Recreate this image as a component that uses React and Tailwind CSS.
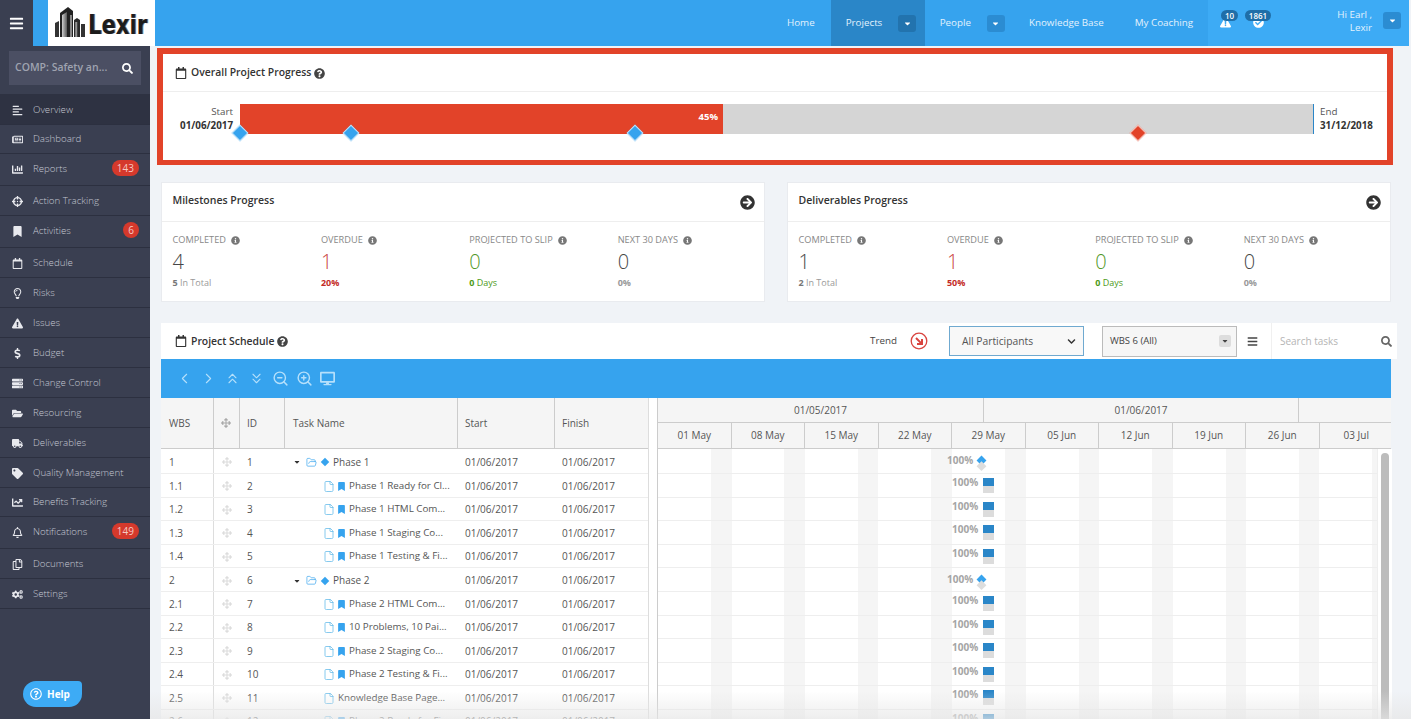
import {
  FaAlignLeft, FaArrowCircleRight, FaArrowsAlt, FaBars, FaBookmark, FaCaretDown, FaChartBar, FaChartLine,
  FaCheckCircle, FaChevronDown, FaCogs, FaCrosshairs, FaDesktop, FaDollarSign, FaExclamationTriangle, FaFolderOpen,
  FaInfoCircle, FaRegBell, FaRegCalendar, FaRegCopy, FaRegLightbulb, FaRegNewspaper, FaRegQuestionCircle,
  FaQuestionCircle, FaSearch, FaServer, FaTag, FaTruck,
} from 'react-icons/fa';
import { ChevronLeft, ChevronRight, ChevronsDown, ChevronsUp, File, FolderOpen, ZoomIn, ZoomOut } from 'lucide-react';

const menu = [
  { name: 'Overview', icon: FaAlignLeft, h: 'h-[31px]', lh: 'h-[32px]', active: true },
  { name: 'Dashboard', icon: FaRegNewspaper, h: 'h-[29px]', lh: 'h-[28px]' },
  { name: 'Reports', icon: FaChartBar, h: 'h-[32px]', badge: '143' },
  { name: 'Action Tracking', icon: FaCrosshairs, h: 'h-[30px]' },
  { name: 'Activities', icon: FaBookmark, h: 'h-[32px]', badge: '6' },
  { name: 'Schedule', icon: FaRegCalendar, h: 'h-[30px]' },
  { name: 'Risks', icon: FaRegLightbulb, h: 'h-[30px]' },
  { name: 'Issues', icon: FaExclamationTriangle, h: 'h-[30px]' },
  { name: 'Budget', icon: FaDollarSign, h: 'h-[30px]' },
  { name: 'Change Control', icon: FaServer, h: 'h-[30px]' },
  { name: 'Resourcing', icon: FaFolderOpen, h: 'h-[30px]' },
  { name: 'Deliverables', icon: FaTruck, h: 'h-[30px]' },
  { name: 'Quality Management', icon: FaTag, h: 'h-[30px]' },
  { name: 'Benefits Tracking', icon: FaChartLine, h: 'h-[29px]', lh: 'h-[28px]' },
  { name: 'Notifications', icon: FaRegBell, h: 'h-[32px]', badge: '149' },
  { name: 'Documents', icon: FaRegCopy, h: 'h-[30px]' },
  { name: 'Settings', icon: FaCogs, h: 'h-[30px]' },
];

const tasks = [
  { wbs: '1', id: '1', name: 'Phase 1', phase: true, h: 'h-[25px]' },
  { wbs: '1.1', id: '2', name: 'Phase 1 Ready for Cl...' },
  { wbs: '1.2', id: '3', name: 'Phase 1 HTML Com...' },
  { wbs: '1.3', id: '4', name: 'Phase 1 Staging Co...' },
  { wbs: '1.4', id: '5', name: 'Phase 1 Testing & Fi...' },
  { wbs: '2', id: '6', name: 'Phase 2', phase: true, h: 'h-[24px]' },
  { wbs: '2.1', id: '7', name: 'Phase 2 HTML Com...' },
  { wbs: '2.2', id: '8', name: '10 Problems, 10 Pai...' },
  { wbs: '2.3', id: '9', name: 'Phase 2 Staging Co...' },
  { wbs: '2.4', id: '10', name: 'Phase 2 Testing & Fi...' },
  { wbs: '2.5', id: '11', name: 'Knowledge Base Page...', plain: true },
  { wbs: '2.6', id: '12', name: 'Phase 2 Ready for Fi...' },
];

const weeks = ['01 May', '08 May', '15 May', '22 May', '29 May', '05 Jun', '12 Jun', '19 Jun', '26 Jun', '03 Jul'];

const milestones = [
  { label: 'COMPLETED', value: '4', bold: '5', sub: ' In Total', color: 'text-[#333]', subColor: 'text-[#999]', boldColor: 'text-[#777]' },
  { label: 'OVERDUE', value: '1', bold: '20%', sub: '', color: 'text-[#c42b27]', subColor: 'text-[#c42b27]', boldColor: 'text-[#c42b27]' },
  { label: 'PROJECTED TO SLIP', value: '0', bold: '0', sub: ' Days', color: 'text-[#3f8f0f]', subColor: 'text-[#4d9a17]', boldColor: 'text-[#4d9a17]' },
  { label: 'NEXT 30 DAYS', value: '0', bold: '0%', sub: '', color: 'text-[#333]', subColor: 'text-[#999]', boldColor: 'text-[#999]' },
];

const deliverables = [
  { ...milestones[0], value: '1', bold: '2' },
  { ...milestones[1], bold: '50%' },
  milestones[2],
  milestones[3],
];

function Diamond({ color, className }) {
  return <div className={`absolute top-[23px] w-[12px] h-[12px] rotate-45 border border-white/70 ${color} ${className}`} />;
}

function Logo() {
  return (
    <div className="w-[107px] h-[46px] bg-white flex items-center pl-[7px] pr-[6px] shrink-0">
      <svg viewBox="0 0 30 31" className="w-[30px] h-[31px] shrink-0 mt-[-1px]">
        <defs>
          <linearGradient id="tower" x1="0" x2="1" y1="0" y2="0">
            <stop offset="0" stopColor="#cfcfcf" />
            <stop offset="1" stopColor="#5a5a5a" />
          </linearGradient>
        </defs>
        <path d="M0 30V16l4-2v16z" fill="#333" />
        <path d="M5 30V6l8-6 5 4v26z" fill="#222" />
        <path d="M7 30V8l5-3v25z" fill="url(#tower)" />
        <path d="M15 30V8h2v22z" fill="#888" />
        <path d="M19 30V13l3-2 3 2v17z" fill="#2a2a2a" />
        <path d="M20.500 30V15h2v15z" fill="url(#tower)" />
        <path d="M26 30V17h4v13z" fill="#333" />
      </svg>
      <span className="ml-[3px] inline-block origin-center scale-y-[1.3] font-['DejaVu_Sans',sans-serif] font-bold text-[21px] leading-none text-[#1c1c1c] tracking-[0.1px] mt-[5px] [text-shadow:1px_0_0_#777]">Lexir</span>
    </div>
  );
}

function NavCaret({ active }) {
  return (
    <div className={`w-[18px] h-[17px] rounded-[3px] flex items-center justify-center text-white ${active ? 'bg-[#2273ae]' : 'bg-[#2b8cd2]'}`}>
      <FaCaretDown className="text-[9px]" />
    </div>
  );
}

function Header() {
  return (
    <header className="flex h-[46px] w-[1409px] shrink-0 bg-[#36a3ee] text-[9.8px] text-[#e3f2fd]">
      <div className="w-[33px] bg-[#3a3f51] flex items-center justify-center shrink-0 text-white">
        <FaBars className="text-[15px]" />
      </div>
      <div className="w-[15px] shrink-0" />
      <Logo />
      <nav className="ml-auto flex items-center h-full">
        <span className="mr-[16px]">Home</span>
        <div className="w-[94px] h-full bg-[#2a86c8] flex items-center pl-[15px] gap-[16px]">
          <span>Projects</span>
          <NavCaret active />
        </div>
        <span className="ml-[15px]">People</span>
        <div className="ml-[16px]"><NavCaret /></div>
        <span className="ml-[24px]">Knowledge Base</span>
        <span className="ml-[31px] mr-[15px]">My Coaching</span>
      </nav>
      <div className="w-[201px] h-full bg-[#3dabf5] flex shrink-0 relative">
        <FaExclamationTriangle className="absolute left-[12px] top-[17px] text-[11px] text-white" />
        <span className="absolute left-[13px] top-[10px] w-[17px] h-[11px] rounded-full bg-[#1f6ea8] text-white text-[8px] font-semibold leading-[11px] text-center">10</span>
        <FaCheckCircle className="absolute left-[45px] top-[17px] text-[11px] text-white" />
        <span className="absolute left-[37px] top-[10px] w-[26px] h-[11px] rounded-full bg-[#1f6ea8] text-white text-[8px] font-semibold leading-[11px] text-center">1861</span>
        <div className="ml-auto mr-[8px] flex items-start gap-[11px] pt-[8px]">
          <div className="text-right leading-[13px]">
            <div>Hi Earl ,</div>
            <div>Lexir</div>
          </div>
          <div className="mt-[4px]"><NavCaret /></div>
        </div>
      </div>
    </header>
  );
}

function Sidebar() {
  return (
    <aside className="w-[150px] shrink-0 h-full bg-[#3a3f51] flex flex-col text-[9.7px] font-light text-[#c4c7d1]">
      <div className="h-[48px] shrink-0 pt-[5px] px-[9px]">
        <div className="h-[34px] bg-[#4b4f63] flex items-center justify-between pl-[6px] pr-[8px]">
          <span className="font-semibold text-[#9fa3b0] text-[10.5px]">COMP: Safety an...</span>
          <FaSearch className="text-[11px] text-white" />
        </div>
      </div>
      {menu.map((item) => (
        <div key={item.name} className={`${item.h} shrink-0 flex items-start border-b border-[#2c3040] ${item.active ? 'bg-[#2e3242]' : ''}`}>
          <div className={`${item.lh || 'h-[30px]'} w-[33px] pl-[12px] flex items-center shrink-0`}>
            <item.icon className="text-[11px] text-[#e8e9ee]" />
          </div>
          <div className={`${item.lh || 'h-[30px]'} flex items-center whitespace-nowrap`}>{item.name}</div>
          {item.badge && (
            <span className="ml-auto mr-[11px] mt-[6px] min-w-[15px] px-[5px] h-[16px] rounded-full bg-[#d5392c] text-[#f5c9c4] text-[10px] font-normal leading-[16px] text-center">{item.badge}</span>
          )}
        </div>
      ))}
      <div className="mt-auto mb-[12px] ml-[23px] w-[59px] h-[26px] rounded-[13px] rounded-tr-[4px] bg-[#3dabf5] text-white text-[10px] font-bold flex items-center pl-[7px] gap-[5px]">
        <FaRegQuestionCircle className="text-[12px]" />
        Help
      </div>
    </aside>
  );
}

function OverallProgress() {
  return (
    <section className="ml-[7px] mt-[2px] w-[1236px] h-[117px] shrink-0 border-[6px] border-b-[5px] border-[#e24329] bg-white">
      <div className="h-[38px] border-b border-[#eee] flex items-center pl-[12px] pt-[1px] text-[#333]">
        <FaRegCalendar className="text-[12px] mr-[4px]" />
        <span className="text-[10.4px] font-semibold mr-[3px]">Overall Project Progress</span>
        <FaQuestionCircle className="text-[11px] text-[#444]" />
      </div>
      <div className="flex pt-[12px] relative">
        <div className="w-[77px] text-right pr-[7px] text-[9.8px] leading-[14px] text-[#555] pt-[1px]">
          <div>Start</div>
          <div className="font-bold text-[#333]">01/06/2017</div>
        </div>
        <div className="w-[1074px] h-[30px] bg-[#d5d5d5] border-r border-[#2a86c8] flex relative">
          <div className="w-[483px] h-full bg-[#e24329] text-white text-[9.5px] font-bold text-right pr-[5px] pt-[6px] leading-[13px]">45%</div>
          <Diamond color="bg-[#36a3ee]" className="left-[-6px]" />
          <Diamond color="bg-[#36a3ee]" className="left-[105px]" />
          <Diamond color="bg-[#36a3ee]" className="left-[389px]" />
          <Diamond color="bg-[#e24329]" className="left-[892px]" />
        </div>
        <div className="pl-[6px] text-[9.8px] leading-[14px] text-[#555] pt-[1px]">
          <div>End</div>
          <div className="font-bold text-[#333]">31/12/2018</div>
        </div>
      </div>
    </section>
  );
}

function StatCard({ title, stats }) {
  return (
    <section className="w-[604px] h-[120px] bg-white border border-[#e9ebef]">
      <div className="h-[39px] border-b border-[#eee] flex items-center justify-between pl-[10.5px] pr-[9px]">
        <span className="text-[10.5px] font-semibold text-[#333] -mt-[3px]">{title}</span>
        <FaArrowCircleRight className="text-[15px] text-[#333]" />
      </div>
      <div className="grid grid-cols-4 pl-[10.5px] pt-[11px] w-[604px]">
        {stats.map((s) => (
          <div key={s.label} className="w-[148px]">
            <div className="flex items-center gap-[5px] text-[9.2px] leading-[14px] text-[#888]">
              {s.label}
              <FaInfoCircle className="text-[9px] text-[#777]" />
            </div>
            <div className={`text-[20px] font-light leading-[26px] mt-[2px] opacity-90 ${s.color}`}>{s.value}</div>
            <div className={`text-[9px] leading-[14px] mt-[1px] ${s.subColor}`}>
              <span className={`font-bold ${s.boldColor}`}>{s.bold}</span>{s.sub}
            </div>
          </div>
        ))}
      </div>
    </section>
  );
}

function ScheduleBar() {
  return (
    <div className="h-[36px] w-[1236px] flex items-center bg-white text-[#444]">
      <div className="w-[709px] flex items-center pl-[14px] pt-[1px]">
        <FaRegCalendar className="text-[12px] text-[#333] mr-[4px]" />
        <span className="text-[10.4px] font-semibold text-[#333] mr-[3px]">Project Schedule</span>
        <FaQuestionCircle className="text-[11px] text-[#444]" />
      </div>
      <span className="text-[9.8px] pt-[1px]">Trend</span>
      <svg viewBox="0 0 18 18" className="w-[18px] h-[18px] ml-[13px]">
        <circle cx="9" cy="9" r="7.8" fill="none" stroke="#d9443f" strokeWidth="1.3" />
        <path d="M6 6l5.600 5.600M7 12h5v-5" fill="none" stroke="#d9443f" strokeWidth="2" />
      </svg>
      <div className="ml-[21px] w-[135px] h-[30px] border border-[#6fa9d0] bg-[#f8f8f8] flex items-center justify-between pl-[12px] pr-[7px] pt-[1px] text-[10.3px] text-[#555]">
        All Participants
        <FaChevronDown className="text-[9px] text-[#333]" />
      </div>
      <div className="ml-[18px] w-[135px] h-[31px] border border-[#bbb] bg-[#f6f6f6] flex items-center justify-between pl-[7px] pr-[5px] text-[9.5px] text-[#444]">
        WBS 6 (All)
        <span className="w-[12px] h-[12px] rounded-[2px] bg-[#ddd] flex items-center justify-center"><FaCaretDown className="text-[8px]" /></span>
      </div>
      <FaBars className="ml-[10px] text-[11px] text-[#444]" />
      <div className="ml-[13px] flex-1 h-full border-l border-[#f0f0f0] flex items-center justify-between pl-[8px] pr-[5px] text-[10px] text-[#b5b5b5]">
        Search tasks
        <FaSearch className="text-[11px] text-[#666]" />
      </div>
    </div>
  );
}

function Toolbar() {
  const icon = 'w-[17px] h-[17px] text-[#b6e0fb]';
  return (
    <div className="h-[39px] bg-[#36a3ee] flex items-center pl-[15px] gap-[7px]">
      <ChevronLeft className={icon} strokeWidth={1.5} />
      <ChevronRight className={icon} strokeWidth={1.5} />
      <ChevronsUp className={icon} strokeWidth={1.5} />
      <ChevronsDown className={icon} strokeWidth={1.5} />
      <ZoomOut className={icon} strokeWidth={2} />
      <ZoomIn className={icon} strokeWidth={2} />
      <FaDesktop className="text-[15px] text-[#b6e0fb]" />
    </div>
  );
}

function TaskName({ task }) {
  if (task.phase) {
    return (
      <div className="flex items-center pl-[8px]">
        <FaCaretDown className="text-[8px] text-[#333] w-[8px]" />
        <FolderOpen className="ml-[5px] w-[11px] h-[11px] text-[#36a3ee]" strokeWidth={1.5} />
        <span className="ml-[5px] w-[6px] h-[6px] bg-[#36a3ee] rotate-45" />
        <span className="ml-[5px]">{task.name}</span>
      </div>
    );
  }
  return (
    <div className="flex items-center pl-[38px] whitespace-nowrap text-[9.8px]">
      <File className="w-[12px] h-[13px] text-[#5fb8e8] shrink-0" strokeWidth={1.5} />
      {!task.plain && <FaBookmark className="ml-[2px] text-[9px] text-[#36a3ee] shrink-0" />}
      <span className="ml-[3px]">{task.name}</span>
    </div>
  );
}

function TaskTable() {
  const th = 'flex items-center pl-[8px] border-r border-[#ccc] shrink-0';
  return (
    <div className="w-[488px] shrink-0 border-r border-[#ddd] text-[10px] text-[#555]">
      <div className="h-[51px] bg-[#f5f5f5] border-b border-[#ccc] flex">
        <div className={`${th} w-[53px]`}>WBS</div>
        <div className={`${th} w-[26px] !pl-[7px]`}><FaArrowsAlt className="text-[10px] text-[#aaa]" /></div>
        <div className={`${th} w-[45px] !pl-[7px]`}>ID</div>
        <div className={`${th} w-[173px]`}>Task Name</div>
        <div className={`${th} w-[97px] !pl-[7px]`}>Start</div>
        <div className="flex items-center pl-[7px]">Finish</div>
      </div>
      {tasks.map((t) => (
        <div key={t.id} className={`${t.h || 'h-[23.5px]'} border-b border-[#eee] flex items-center pt-[2px]`}>
          <div className="w-[53px] pl-[8px] self-stretch -mt-[2px] pt-[2px] flex items-center border-r border-[#ddd]">{t.wbs}</div>
          <div className="w-[26px] pl-[8px] shrink-0"><FaArrowsAlt className="text-[10px] text-[#ddd]" /></div>
          <div className="w-[45px] pl-[7px] shrink-0">{t.id}</div>
          <div className="w-[173px] shrink-0"><TaskName task={t} /></div>
          <div className="w-[97px] pl-[7px] shrink-0">01/06/2017</div>
          <div className="pl-[7px]">01/06/2017</div>
        </div>
      ))}
    </div>
  );
}

function Gantt() {
  return (
    <div className="ml-[8px] w-[734px] border-l border-[#ccc] text-[10px] text-[#555] relative">
      <div className="h-[25px] bg-[#f5f5f5] border-b border-[#ccc] flex">
        <div className="w-[326px] border-r border-[#ccc] text-center leading-[24px]">01/05/2017</div>
        <div className="w-[315px] border-r border-[#ccc] text-center leading-[24px]">01/06/2017</div>
      </div>
      <div className="h-[26px] bg-[#f5f5f5] border-b border-[#ccc] flex">
        {weeks.map((w) => (
          <div key={w} className="w-[73.5px] shrink-0 border-r border-[#ccc] last:border-r-0 text-center leading-[25px]">{w}</div>
        ))}
      </div>
      <div className="bg-[repeating-linear-gradient(90deg,#fff_0,#fff_53px,#f5f5f5_53px,#f5f5f5_73.5px)]">
        {tasks.map((t) => (
          <div key={t.id} className={`${t.h || 'h-[23.5px]'} border-b border-[#eee] flex text-[10px] font-bold text-[#a5a5a5]`}>
            {t.phase ? (
              <div className="pl-[289px] flex items-start">
                <span className="leading-[22px]">100%</span>
                <span className="relative ml-[5px] mt-[8px] w-[7px] h-[7px] rotate-45 bg-[#36a3ee]">
                  <span className="absolute left-[4px] top-[4px] w-[7px] h-[7px] bg-[#ddd]" />
                </span>
              </div>
            ) : (
              <div className="pl-[294px] flex items-start">
                <span className="leading-[16px]">100%</span>
                <div className="ml-[5px] mt-[4px] w-[11px]">
                  <div className="h-[8px] bg-[#2a86c8]" />
                  <div className="h-[7px] bg-[#dcdcdc]" />
                </div>
              </div>
            )}
          </div>
        ))}
      </div>
      <div className="absolute top-[51px] bottom-0 left-[719px] w-[15px] bg-white border-l border-[#eee] pl-[3px] pt-[4px]">
        <div className="w-[8px] h-full rounded-full bg-[#bcbcbc]" />
      </div>
    </div>
  );
}

export default function App() {
  return (
    <div className="w-[1411px] h-[719px] overflow-hidden relative flex flex-col bg-[#f0f3f7] font-['Open_Sans',sans-serif]">
      <Header />
      <div className="flex flex-1 min-h-0">
        <Sidebar />
        <main className="flex-1 min-w-0 flex flex-col overflow-hidden">
          <OverallProgress />
          <div className="flex gap-[22px] ml-[11px] mt-[17px] shrink-0">
            <StatCard title="Milestones Progress" stats={milestones} />
            <StatCard title="Deliverables Progress" stats={deliverables} />
          </div>
          <div className="ml-[11px] mt-[21px] w-[1230px]">
            <ScheduleBar />
            <Toolbar />
            <div className="flex bg-white">
              <TaskTable />
              <Gantt />
            </div>
          </div>
        </main>
      </div>
      <div className="absolute bottom-0 left-[150px] right-0 h-[28px] bg-gradient-to-b from-transparent to-[#e6e6e6]/70 pointer-events-none" />
    </div>
  );
}
